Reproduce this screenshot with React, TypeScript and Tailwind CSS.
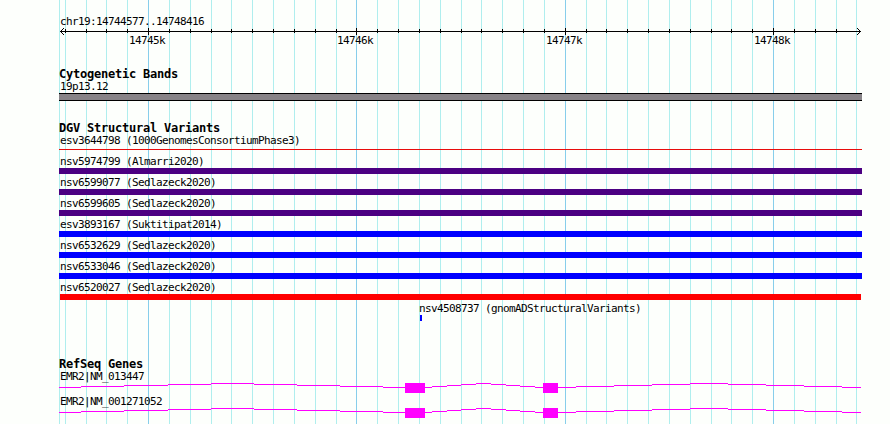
const START = 59

const minorLines = [
  59, 65, 86, 106, 127, 169, 190, 211, 231, 252, 273, 294, 315, 336, 377, 398, 419, 440, 461, 481, 502, 523, 544,
  586, 606, 627, 648, 669, 690, 711, 731, 752, 794, 815, 836, 856,
]

const majorLines = [
  { x: 148, label: "14745k" },
  { x: 356, label: "14746k" },
  { x: 565, label: "14747k" },
  { x: 773, label: "14748k" },
]

const variants = [
  { name: "esv3644798 (1000GenomesConsortiumPhase3)", bar: "mt-[2px] mb-[5px] h-px bg-[#e80c0c]" },
  { name: "nsv5974799 (Almarri2020)", bar: "mb-[2px] h-[6px] bg-[#4b0082]" },
  { name: "nsv6599077 (Sedlazeck2020)", bar: "mb-[2px] h-[6px] bg-[#4b0082]" },
  { name: "nsv6599605 (Sedlazeck2020)", bar: "mb-[2px] h-[6px] bg-[#4b0082]" },
  { name: "esv3893167 (Suktitipat2014)", bar: "mb-[2px] h-[6px] bg-[#0000ff]" },
  { name: "nsv6532629 (Sedlazeck2020)", bar: "mb-[2px] h-[6px] bg-[#0000ff]" },
  { name: "nsv6533046 (Sedlazeck2020)", bar: "mb-[2px] h-[6px] bg-[#0000ff]" },
  { name: "nsv6520027 (Sedlazeck2020)", bar: "mb-[1px] mx-px h-[6px] bg-[#ff0000]" },
]

// breakpoints of the three introns, each one rises 4px and falls back
const introns = [
  [59, 81, 124, 168, 211, 254, 297, 340, 383, 405],
  [425, 432, 447, 461, 476, 491, 506, 520, 535, 543],
  [558, 576, 614, 652, 690, 728, 766, 804, 842, 861],
]

const exons = [
  { x: 405, width: 20 },
  { x: 543, width: 15 },
]

function Grid() {
  return (
    <svg className="absolute inset-0" width="890" height="424" shapeRendering="crispEdges">
      {minorLines.map((x) => (
        <rect key={x} x={x} y="0" width="1" height="424" fill="#afeeee" />
      ))}
      {majorLines.map(({ x }) => (
        <rect key={x} x={x} y="0" width="1" height="424" fill="#87ceeb" />
      ))}
    </svg>
  )
}

function Ruler() {
  return (
    <svg className="block" width="803" height="7" viewBox="59 28 803 7" shapeRendering="crispEdges">
      <rect x="60" y="31" width="801" height="1" />
      {/* no ticks at the two ends, the arrow heads sit there */}
      {minorLines.slice(1, -1).map((x) => (
        <rect key={x} x={x} y="29" width="1" height="4" />
      ))}
      {majorLines.map(({ x }) => (
        <rect key={x} x={x} y="28" width="1" height="7" />
      ))}
      {[1, 2, 3].map((d) => (
        <g key={d}>
          <rect x={60 + d} y={31 - d} width="1" height="1" />
          <rect x={60 + d} y={31 + d} width="1" height="1" />
          <rect x={860 - d} y={31 - d} width="1" height="1" />
          <rect x={860 - d} y={31 + d} width="1" height="1" />
        </g>
      ))}
    </svg>
  )
}

function Label({ children }: { children: string }) {
  return <div className="h-[13px] pl-px leading-[13px]">{children}</div>
}

function Title({ children }: { children: string }) {
  return <h2 className="h-[13px] text-[12px] leading-[14px] font-bold tracking-[-0.224px]">{children}</h2>
}

function Gene({ name }: { name: string }) {
  return (
    <div className="h-[25px]">
      <Label>{name}</Label>
      <svg className="block" width="803" height="12" viewBox="59 383 803 12" shapeRendering="crispEdges" fill="#ff00ff">
        {introns.map((points) =>
          points.slice(0, -1).map((x, i) => (
            <rect key={x} x={x} y={383 + Math.abs(4 - i)} width={points[i + 1] - x} height="1" />
          ))
        )}
        {exons.map(({ x, width }) => (
          <rect key={x} x={x} y="383" width={width} height="10" />
        ))}
      </svg>
    </div>
  )
}

export default function App() {
  return (
    <div className="relative h-[424px] w-[890px] overflow-hidden bg-[#fdfffc]">
      <Grid />
      <main className="relative ml-[59px] w-[803px] pt-[15px] font-['DejaVu_Sans_Mono',monospace] text-[11px] tracking-[-0.623px] whitespace-pre text-black">
        <Label>chr19:14744577..14748416</Label>
        <Ruler />
        <div className="relative -mt-px h-[33px]">
          {majorLines.map(({ x, label }) => (
            <span key={label} className="absolute top-0 leading-[13px]" style={{ left: x - 19 - START }}>
              {label}
            </span>
          ))}
        </div>

        <section className="h-[54px]">
          <Title>Cytogenetic Bands</Title>
          <Label>19p13.12</Label>
          <div className="h-[8px] border-y border-black bg-[#878387]" />
        </section>

        <section className="h-[236px]">
          <Title>DGV Structural Variants</Title>
          {variants.map(({ name, bar }) => (
            <div key={name} className="flow-root">
              <Label>{name}</Label>
              <div className={bar} />
            </div>
          ))}
          <div className="mt-px pl-[360px]">
            <div className="h-[13px] leading-[13px]">nsv4508737 (gnomADStructuralVariants)</div>
            <div className="ml-px h-[6px] w-[2px] bg-[#0000ff]" />
          </div>
        </section>

        <section>
          <Title>RefSeq Genes</Title>
          <Gene name="EMR2|NM_013447" />
          <Gene name="EMR2|NM_001271052" />
        </section>
      </main>
    </div>
  )
}
